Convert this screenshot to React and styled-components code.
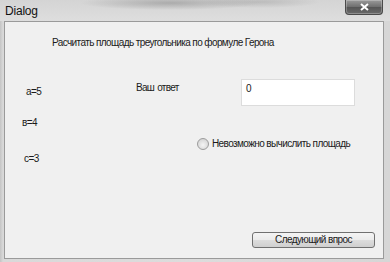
import * as React from 'react'
import styled, { createGlobalStyle } from 'styled-components'

const GlobalStyle = createGlobalStyle`
  body {
    margin: 0;
    background: #d4d4d4;
    font-family: "Liberation Sans", Arial, sans-serif;
  }
`

const Window = styled.div`
  width: 390px;
  height: 262px;
  display: flex;
  flex-direction: column;
  background: linear-gradient(90deg, #c4c4c4 0px, #d9d9d9 3px, #dcdcdc 50%, #d6d6d6 100%);
  overflow: hidden;
`

const TitleBar = styled.div`
  height: 21px;
  display: flex;
  align-items: flex-start;
  justify-content: space-between;
  padding: 0 7px 0 5px;
  background:
    radial-gradient(ellipse 90px 7px at 170px 3px, rgba(120,120,120,0.45), rgba(120,120,120,0) 100%),
    radial-gradient(ellipse 60px 6px at 260px 2px, rgba(140,140,140,0.35), rgba(140,140,140,0) 100%),
    linear-gradient(180deg, #d4d4d4, #dedede);
`

const Title = styled.span`
  font-size: 12px;
  line-height: 14px;
  margin-top: 4px;
  letter-spacing: -0.2px;
  color: #111;
`

const CloseButton = styled.div`
  width: 36px;
  height: 14px;
  display: flex;
  align-items: center;
  justify-content: center;
  border: 1px solid #4a4a4a;
  border-top: none;
  border-radius: 0 0 4px 4px;
  background: linear-gradient(180deg, #9a9a9a 0%, #6e6e6e 50%, #555 51%, #6a6a6a 100%);
  box-shadow: inset 0 0 0 1px rgba(255,255,255,0.25);
`

const Body = styled.div`
  flex: 1;
  display: flex;
  padding: 0 6px 3px 4px;
`

const Client = styled.div`
  flex: 1;
  display: flex;
  flex-direction: column;
  background: #f0f0f0;
  border: 1px solid #9a9a9a;
  color: #1a1a1a;
  font-size: 10px;
  line-height: 14px;
  letter-spacing: -0.6px;
`

const Heading = styled.div`
  margin: 14px 0 0 47px;
`

const MainRow = styled.div`
  display: flex;
  margin-top: 29px;
`

const LabelCol = styled.div`
  width: 131px;
  display: flex;
  flex-direction: column;
`

const VarLabel = styled.div`
  padding-left: ${p => p.$indent}px;
  margin-top: ${p => p.$top}px;
`

const RightArea = styled.div`
  display: flex;
  flex-direction: column;
`

const AnswerRow = styled.div`
  display: flex;
  align-items: flex-start;
`

const AnswerLabel = styled.div`
  width: 105px;
  margin-top: 2px;
  letter-spacing: -0.7px;
  word-spacing: 1px;
`

const Input = styled.div`
  width: 114px;
  height: 27px;
  box-sizing: border-box;
  background: #fff;
  border: 1px solid #dcdcdc;
  padding: 2px 0 0 4px;
`

const RadioRow = styled.label`
  display: flex;
  align-items: center;
  gap: 3px;
  margin: 31px 0 0 61px;
`

const Radio = styled.span`
  width: 12px;
  height: 12px;
  box-sizing: border-box;
  border-radius: 50%;
  border: 1px solid #9c9c9c;
  background: radial-gradient(circle at 50% 60%, #f4f4f4 0%, #d8d8d8 70%, #c8c8c8 100%);
`

const Footer = styled.div`
  margin-top: auto;
  display: flex;
  justify-content: flex-end;
  padding: 0 8px 10px 0;
`

const Button = styled.button`
  width: 123px;
  height: 16px;
  padding: 0;
  font-family: inherit;
  font-size: 10px;
  line-height: 14px;
  letter-spacing: -0.6px;
  color: #1a1a1a;
  border: 1px solid #707070;
  border-radius: 3px;
  background: linear-gradient(180deg, #f4f4f4 0%, #ebebeb 50%, #dddddd 51%, #cfcfcf 100%);
`

export default function App() {
  return (
    <Window>
      <GlobalStyle />
      <TitleBar>
        <Title>Dialog</Title>
        <CloseButton>
          <svg width="9" height="8" viewBox="0 0 9 8">
            <path d="M1 1 L8 7 M8 1 L1 7" stroke="#fff" strokeWidth="2" />
          </svg>
        </CloseButton>
      </TitleBar>
      <Body>
        <Client>
          <Heading>Расчитать площадь треугольника по формуле Герона</Heading>
          <MainRow>
            <LabelCol>
              <VarLabel $indent={21} $top={6}>a=5</VarLabel>
              <VarLabel $indent={17} $top={17}>в=4</VarLabel>
              <VarLabel $indent={19} $top={22}>c=3</VarLabel>
            </LabelCol>
            <RightArea>
              <AnswerRow>
                <AnswerLabel>Ваш ответ</AnswerLabel>
                <Input>0</Input>
              </AnswerRow>
              <RadioRow>
                <Radio />
                Невозможно вычислить площадь
              </RadioRow>
            </RightArea>
          </MainRow>
          <Footer>
            <Button>Следующий впрос</Button>
          </Footer>
        </Client>
      </Body>
    </Window>
  )
}
